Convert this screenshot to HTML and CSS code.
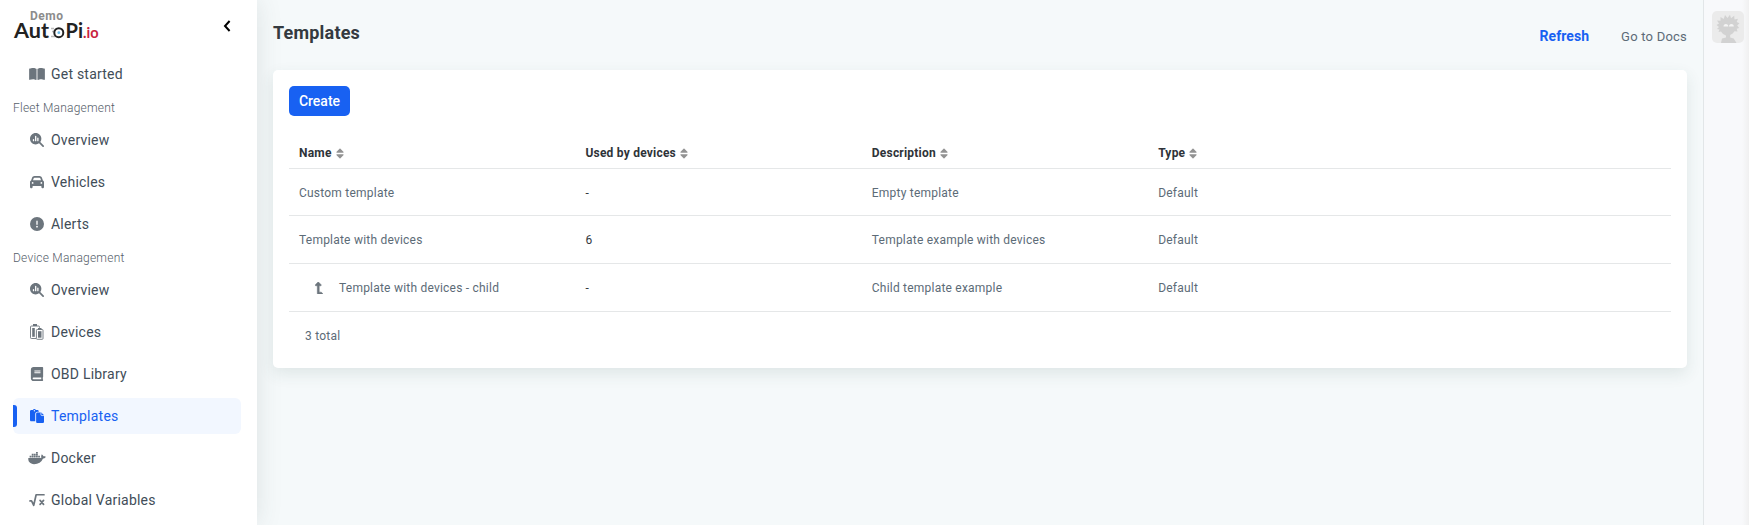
FILE: index.html
```html
<!DOCTYPE html>
<html lang="en">
<head>
<meta charset="utf-8">
<title>Templates</title>
<link rel="stylesheet" href="styles.css">
</head>
<body>
<svg class="sprite" width="0" height="0" aria-hidden="true">
  <symbol id="book-open" viewBox="0 0 576 512"><path d="M249.6 471.5c10.8 3.8 22.4-4.1 22.4-15.5V78.6c0-4.2-1.6-8.4-5-11C247.4 52 202.4 32 144 32C93.5 32 46.3 45.3 18.1 56.1C6.8 60.5 0 71.7 0 83.8V454.1c0 11.9 12.8 20.2 24.1 16.5C55.6 460.1 105.5 448 144 448c33.9 0 79 14 105.6 23.5zm76.8 0C353 462 398.1 448 432 448c38.5 0 88.4 12.1 119.9 22.6c11.3 3.8 24.1-4.6 24.1-16.5V83.8c0-12.1-6.8-23.3-18.1-27.6C529.7 45.3 482.5 32 432 32c-58.4 0-103.4 20-123 35.6c-3.3 2.6-5 6.8-5 11V456c0 11.4 11.7 19.3 22.4 15.5z"/></symbol>
  <symbol id="search-chart" viewBox="0 0 512 512"><path fill-rule="evenodd" d="M416 208c0 45.900-14.900 88.300-40 122.700L502.600 457.400c12.500 12.500 12.500 32.800 0 45.300s-32.800 12.500-45.300 0L330.700 376c-34.400 25.200-76.800 40-122.700 40C93.100 416 0 322.900 0 208S93.100 0 208 0S416 93.100 416 208zM104 240v40c0 32 48 32 48 0v-40c0-32-48-32-48 0zM184 120v160c0 32 48 32 48 0v-160c0-32-48-32-48 0zM264 184v96c0 32 48 32 48 0v-96c0-32-48-32-48 0z"/></symbol>
  <symbol id="car" viewBox="0 0 512 512"><path d="M135.200 117.400L109.100 192H402.900l-26.100-74.600C372.300 104.600 360.200 96 346.600 96H165.400c-13.600 0-25.700 8.600-30.200 21.400zM39.600 196.800L74.800 96.300C88.300 57.800 124.600 32 165.400 32H346.600c40.800 0 77.100 25.800 90.600 64.300l35.200 100.500c23.200 9.600 39.600 32.500 39.600 59.200V400v48c0 17.700-14.300 32-32 32H448c-17.700 0-32-14.300-32-32V400H96v48c0 17.700-14.300 32-32 32H32c-17.700 0-32-14.300-32-32V400 256c0-26.700 16.400-49.600 39.600-59.200zM128 288a32 32 0 1 0 -64 0 32 32 0 1 0 64 0zm288 32a32 32 0 1 0 0-64 32 32 0 1 0 0 64z"/></symbol>
  <symbol id="alert" viewBox="0 0 512 512"><path d="M256 512A256 256 0 1 0 256 0a256 256 0 1 0 0 512zm0-384c13.300 0 24 10.700 24 24V264c0 13.300-10.700 24-24 24s-24-10.700-24-24V152c0-13.300 10.700-24 24-24zM224 352a32 32 0 1 1 64 0 32 32 0 1 1 -64 0z"/></symbol>
  <symbol id="devices" viewBox="0 0 14 16"><path d="M3 0h4v2H3z"/><path d="M6 14.500H1.300a.8.800 0 0 1-.8-.8V3a1 1 0 0 1 1-1h7a1 1 0 0 1 1 1v.7" fill="none" stroke="currentColor" stroke-width=".9"/><path d="M2.200 4h2.600v8.800H2.200z"/><path d="M8 4h3.500v1.600H8z"/><rect x="6.400" y="5.500" width="6.600" height="9.800" rx=".8" fill="none" stroke="currentColor" stroke-width=".9"/><path d="M8 7.200h3.500v6.500H8z"/></symbol>
  <symbol id="book" viewBox="0 0 448 512"><path d="M448 360V24c0-13.300-10.700-24-24-24H96C43 0 0 43 0 96v320c0 53 43 96 96 96h328c13.300 0 24-10.700 24-24v-16c0-7.500-3.500-14.300-8.900-18.700-4.200-15.400-4.200-59.300 0-74.700 5.400-4.300 8.900-11.100 8.900-18.600zM128 134c0-3.300 2.700-6 6-6h212c3.300 0 6 2.700 6 6v20c0 3.300-2.700 6-6 6H134c-3.300 0-6-2.700-6-6v-20zm0 64c0-3.300 2.700-6 6-6h212c3.300 0 6 2.700 6 6v20c0 3.300-2.700 6-6 6H134c-3.300 0-6-2.700-6-6v-20zm253.400 250H96c-17.700 0-32-14.300-32-32 0-17.600 14.400-32 32-32h285.400c-1.900 17.100-1.900 46.900 0 64z"/></symbol>
  <symbol id="paste" viewBox="0 0 512 512"><path d="M160 0c-23.700 0-44.400 12.900-55.400 32H48C21.500 32 0 53.500 0 80V400c0 26.500 21.500 48 48 48H192V176c0-44.200 35.800-80 80-80h48V80c0-26.500-21.500-48-48-48H215.400C204.400 12.900 183.700 0 160 0zm0 40a24 24 0 1 1 0 48 24 24 0 1 1 0-48zM272 128c-26.500 0-48 21.500-48 48V464c0 26.500 21.500 48 48 48H464c26.500 0 48-21.500 48-48V243.900c0-12.700-5.100-24.900-14.100-33.900l-67.900-67.900c-9-9-21.200-14.100-33.900-14.100z"/><path d="M400 128v80a32 32 0 0 0 32 32h80" fill="none" stroke="#f2f7ff" stroke-width="28"/></symbol>
  <symbol id="docker" viewBox="0 0 640 512"><path d="M349.900 236.300h-66.100v-59.400h66.100v59.400zm0-204.300h-66.100v60.700h66.100V32zm78.200 144.800H362v59.400h66.100v-59.400zm-156.300-72.100h-66.100v60.100h66.100v-60.100zm78.100 0h-66.100v60.100h66.100v-60.100zm276.800 100c-14.400-9.700-47.600-13.200-73.100-8.400-3.300-24-16.700-44.900-41.100-63.700l-14-9.300-9.300 14c-18.400 27.800-23.400 73.600-3.700 103.800-8.700 4.700-25.800 11.100-48.400 10.700H2.400c-8.700 50.800 5.800 116.800 44 162.100 37.100 43.900 92.700 66.200 165.400 66.200 157.400 0 273.900-72.500 328.400-204.200 21.400.4 67.600.1 91.300-45.200 1.500-2.500 6.600-13.200 8.500-17.100l-13.300-8.900zm-511.100-27.900h-66v59.400h66.100v-59.400zm78.100 0h-66.100v59.400h66.100v-59.400zm78.100 0h-66.100v59.400h66.100v-59.400zm-78.100-72.100h-66.100v60.100h66.100v-60.100z"/></symbol>
  <symbol id="root" viewBox="0 0 576 512"><path d="M32 288h56l80 160L256 64h288M400 272l128 144M528 272L400 416" fill="none" stroke="currentColor" stroke-width="62" stroke-linecap="round" stroke-linejoin="round"/></symbol>
  <symbol id="sort" viewBox="0 0 320 512"><path d="M41 288h238c21.400 0 32.100 25.900 17 41L177 448c-9.400 9.400-24.600 9.400-33.900 0L24 329c-15.100-15.100-4.400-41 17-41zm255-105L177 64c-9.400-9.400-24.600-9.400-33.900 0L24 183c-15.100 15.100-4.400 41 17 41h238c21.400 0 32.100-25.900 17-41z"/></symbol>
  <symbol id="level-up" viewBox="0 0 320 512"><path stroke="currentColor" stroke-width="24" transform="translate(320 0) scale(-1 1)" d="M313.553 119.669L209.587 7.666c-9.485-10.214-25.676-10.229-35.174 0L70.438 119.669C56.232 134.969 67.062 160 88.025 160H152v272H68.024a11.996 11.996 0 0 0-8.485 3.515l-56 56C-4.021 499.074 1.333 512 12.024 512H208c13.255 0 24-10.745 24-24V160h63.966c20.878 0 31.851-24.969 17.587-40.331z"/></symbol>
</svg>
<div class="app">
  <aside class="sidebar">
    <div class="brand">
      <svg class="logo" width="90" height="32" viewBox="0 0 90 32" role="img" aria-label="AutoPi.io">
        <text class="logo-demo" x="17" y="10" textLength="33">Demo</text>
        <text class="logo-main" x="1" y="27.500" textLength="35" lengthAdjust="spacingAndGlyphs">Aut</text>
        <text class="logo-main" x="52.500" y="27.500" textLength="17.500" lengthAdjust="spacingAndGlyphs">Pi</text>
        <text class="logo-io" x="70" y="27.500" textLength="15.500" lengthAdjust="spacingAndGlyphs">.io</text>
        <path d="M38 18.500h3M39 21.500h2M38 26.500h5" stroke="#bbb" stroke-width="1.500" fill="none"/>
        <circle cx="45.800" cy="22.700" r="4.500" fill="#fff" stroke="#222" stroke-width="2"/>
        <circle cx="45.800" cy="22.700" r="1.400" fill="#6bbbe8"/>
      </svg>
      <svg class="chevron" width="8" height="12" viewBox="0 0 8 12"><path d="M6.600 1L2 6l4.600 5" fill="none" stroke="#000" stroke-width="2"/></svg>
    </div>
    <nav class="nav">
      <a class="nav-item"><svg class="icon"><use href="#book-open"/></svg><span>Get started</span></a>
      <div class="nav-label">Fleet Management</div>
      <a class="nav-item"><svg class="icon"><use href="#search-chart"/></svg><span>Overview</span></a>
      <a class="nav-item"><svg class="icon"><use href="#car"/></svg><span>Vehicles</span></a>
      <a class="nav-item"><svg class="icon"><use href="#alert"/></svg><span>Alerts</span></a>
      <div class="nav-label">Device Management</div>
      <a class="nav-item"><svg class="icon"><use href="#search-chart"/></svg><span>Overview</span></a>
      <a class="nav-item"><svg class="icon tall"><use href="#devices"/></svg><span>Devices</span></a>
      <a class="nav-item"><svg class="icon"><use href="#book"/></svg><span>OBD Library</span></a>
      <a class="nav-item active"><svg class="icon"><use href="#paste"/></svg><span>Templates</span></a>
      <a class="nav-item"><svg class="icon"><use href="#docker"/></svg><span>Docker</span></a>
      <a class="nav-item"><svg class="icon"><use href="#root"/></svg><span>Global Variables</span></a>
    </nav>
  </aside>
  <main class="main">
    <header class="page-head">
      <h1>Templates</h1>
      <div class="actions"><a class="refresh">Refresh</a><a class="docs">Go to Docs</a></div>
    </header>
    <section class="card">
      <button class="create">Create</button>
      <div class="table">
        <div class="row head">
          <div>Name<svg class="sort"><use href="#sort"/></svg></div>
          <div>Used by devices<svg class="sort"><use href="#sort"/></svg></div>
          <div>Description<svg class="sort"><use href="#sort"/></svg></div>
          <div>Type<svg class="sort"><use href="#sort"/></svg></div>
        </div>
        <div class="row first"><div>Custom template</div><div class="count">-</div><div>Empty template</div><div>Default</div></div>
        <div class="row"><div>Template with devices</div><div class="count">6</div><div>Template example with devices</div><div>Default</div></div>
        <div class="row"><div class="child"><svg class="level"><use href="#level-up"/></svg>Template with devices - child</div><div class="count">-</div><div>Child template example</div><div>Default</div></div>
      </div>
      <div class="total">3 total</div>
    </section>
  </main>
  <aside class="rail">
    <svg class="avatar" width="32" height="32" viewBox="0 0 32 32"><rect width="32" height="32" rx="5" fill="#ebebeb"/><path d="M9 32l1-4.500 4-1v-2l-3-1.500-2-2.500-2.500.5 1-2.500L5 18l2-2-2.500-2L7 12.500 5 9.500l3.500.3L8.500 6l3.200 2L13 4l2.500 3L18 3.700l1 3.500 3.200-2.500.3 3.700 3.500-.6-1.300 3.200 2.800 1.200-2.300 2.300 2 2.400-2.500.9.800 2.700-3-.3-1.800 2.300-2.500 1.500V26.500l3.500 1L24.500 32z" fill="#d2d2d2"/><path d="M11.500 15.500a2.300 2.500 0 0 1 4.800 0zm5.500 0a2.300 2.500 0 0 1 4.800 0z" fill="#f4f4f4"/></svg>
  </aside>
</div>
</body>
</html>
```
FILE: styles.css
```css
* { box-sizing: border-box; }
body { margin: 0; height: 525px; overflow: hidden; background: #f5f9fa; font-family: Roboto, sans-serif; font-size: 12px; letter-spacing: 0.22px; color: #5c6b77; }
.sprite { position: absolute; }
svg { fill: currentColor; flex: none; }
.app { display: flex; height: 525px; }
.sidebar { width: 257px; background: #fff; box-shadow: 0 0 24px rgba(60, 80, 80, 0.13); padding: 10px 16px 0 13px; }
.brand { display: flex; height: 46px; justify-content: space-between; }
.logo text { letter-spacing: 0; }
.logo-demo { font: 700 12px Roboto, sans-serif; fill: #8c8c8c; }
.logo-main { font: 700 20px Lato, sans-serif; fill: #222; }
.logo-io { font: 700 15px Lato, sans-serif; fill: #c8233f; }
.chevron { margin: 10px 10px 0 0; }
.nav { display: flex; flex-direction: column; }
.nav-item { position: relative; display: flex; align-items: center; height: 36px; margin-bottom: 6px; padding-left: 15px; border-radius: 6px; font-size: 14px; color: #414d58; gap: 5px; }
.nav-item .icon { width: 18px; height: 14px; color: #6c757d; }
.nav-item .icon.tall { height: 16px; }
.nav-label { height: 24px; line-height: 21px; font-weight: 300; color: #56606a; }
.nav-item.active, .nav-item.active .icon { color: #1861f2; }
.nav-item.active { background: #f2f7ff; }
.nav-item.active::before { content: ""; position: absolute; left: 0; top: 7px; width: 4px; height: 22px; background: #1861f2; border-radius: 0 3px 3px 0; }
.main { flex: 1; padding: 0 16px; }
.page-head { height: 70px; display: flex; justify-content: space-between; }
h1 { margin: 22px 0 0; font-size: 18px; line-height: 22px; font-weight: 700; letter-spacing: 0.2px; color: #343a40; }
.actions { display: flex; gap: 32px; padding-top: 26px; line-height: 20px; }
.refresh { font-size: 14px; font-weight: 700; letter-spacing: 0.05px; color: #1861f2; }
.docs { font-size: 13px; line-height: 21px; }
.card { height: 298px; padding: 16px; background: #fff; border-radius: 5px; box-shadow: 0 6px 16px rgba(50, 80, 70, 0.11); }
.create { display: block; width: 61px; height: 30px; padding: 0; border: 0; border-radius: 5px; background: #1861f2; color: #fff; font: 500 14px Roboto, sans-serif; letter-spacing: 0; }
.table { padding-top: 22px; }
.row { display: grid; grid-template-columns: 286.400px 286.400px 286.400px 1fr; align-items: center; height: 48px; border-bottom: 1px solid #e5e7e8; }
.row > div { display: flex; align-items: center; padding-left: 10px; }
.row.head { height: 31px; font-weight: 700; color: #2e3338; }
.row.first { height: 47px; padding-top: 2px; }
.sort { width: 8px; height: 13px; margin-left: 4px; color: #929292; }
.row .count { color: #343a40; }
.level { width: 8px; height: 12px; margin: 0 16px 0 16px; color: #6c757d; }
.total { padding: 16px; line-height: 16px; }
.rail { width: 46px; border-left: 1px solid #e2e6e8; background: linear-gradient(to right, #f8f9fb 38px, #efefef 46px); padding: 11px 0 0 8px; }
```
